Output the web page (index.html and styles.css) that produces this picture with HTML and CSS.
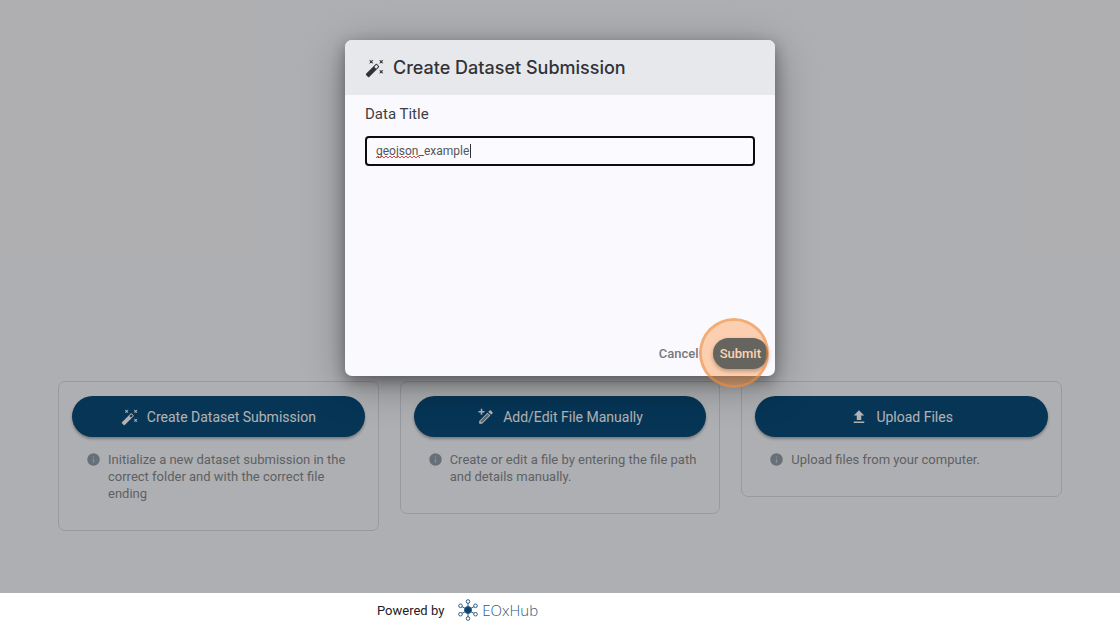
FILE: index.html
```
<!DOCTYPE html>
<html lang="en">
<head>
  <meta charset="UTF-8">
  <title>Dataset Submission</title>
  <link rel="stylesheet" href="styles.css">
</head>
<body>
  <svg class="sprite" aria-hidden="true">
    <symbol id="wand" viewBox="0 0 24 24">
      <path d="M7.5 5.6L5 7l1.4-2.5L5 2l2.5 1.4L10 2 8.6 4.500 10 7 7.500 5.600M19.500 15.400L22 14l-1.400 2.500L22 19l-2.500-1.400L17 19l1.400-2.500L17 14l2.500 1.400M22 2l-1.400 2.500L22 7l-2.500-1.400L17 7l1.400-2.500L17 2l2.500 1.400L22 2m-8.660 10.780l2.440-2.440-2.120-2.120-2.440 2.440 2.120 2.120m1.030-5.490l2.340 2.340c.39.37.39 1.020 0 1.410L5.040 22.710c-.39.39-1.040.39-1.410 0l-2.340-2.340c-.39-.37-.39-1.020 0-1.410L12.960 7.290c.39-.39 1.040-.39 1.410 0z"/>
    </symbol>
    <symbol id="pencil-plus" viewBox="0 0 24 24">
      <path d="M20.700 7c.4-.4.4-1.100 0-1.400l-2.300-2.300c-.4-.4-1.100-.4-1.400 0l-1.900 1.800 3.800 3.800M14 6.200l-11 11V21h3.800l11-11.100M6.300 19.800l-2-2L14 8.100l2 2M5 1h2v3h3v2H7v3H5V6H2V4h3z"/>
      <path d="M3.700 17.700L14 7.300l2.700 2.700L6.400 20.300H3.700z" fill-opacity=".4"/>
    </symbol>
    <symbol id="upload" viewBox="0 0 24 24">
      <path d="M9 16v-6H5l7-7 7 7h-4v6H9m-4 4v-2h14v2H5z"/>
    </symbol>
    <symbol id="info" viewBox="0 0 24 24">
      <circle cx="12" cy="12" r="9" fill-opacity=".5"/>
      <path d="M13 9h-2V7h2m0 10h-2v-6h2m-1-9a10 10 0 1 0 0 20 10 10 0 0 0 0-20z"/>
    </symbol>
  </svg>

  <main class="page">
    <div class="cards">
      <section class="card">
        <button type="button" class="action"><svg class="icon"><use href="#wand"/></svg>Create Dataset Submission</button>
        <div class="hint">
          <svg class="hint-icon"><use href="#info"/></svg>
          <p>Initialize a new dataset submission in the correct folder and with the correct file ending</p>
        </div>
      </section>
      <section class="card">
        <button type="button" class="action"><svg class="icon"><use href="#pencil-plus"/></svg>Add/Edit File Manually</button>
        <div class="hint">
          <svg class="hint-icon"><use href="#info"/></svg>
          <p>Create or edit a file by entering the file path and details manually.</p>
        </div>
      </section>
      <section class="card">
        <button type="button" class="action"><svg class="icon"><use href="#upload"/></svg>Upload Files</button>
        <div class="hint">
          <svg class="hint-icon"><use href="#info"/></svg>
          <p>Upload files from your computer.</p>
        </div>
      </section>
    </div>

    <div class="scrim">
      <form class="dialog" role="dialog" aria-labelledby="dialogTitle">
        <header class="dialog-header">
          <svg class="title-icon"><use href="#wand"/></svg>
          <h1 id="dialogTitle">Create Dataset Submission</h1>
        </header>
        <div class="dialog-body">
          <label for="dataTitle">Data Title</label>
          <div class="field">
            <input type="text" id="dataTitle" value="geojson_example">
            <svg class="squiggle" viewBox="0 0 44 4"><path d="M0 3l2-2 2 2 2-2 2 2 2-2 2 2 2-2 2 2 2-2 2 2 2-2 2 2 2-2 2 2 2-2 2 2 2-2 2 2 2-2 2 2 2-2 2 2"/></svg>
            <span class="caret"></span>
          </div>
        </div>
        <footer class="dialog-actions">
          <button type="button" class="cancel">Cancel</button>
          <div class="submit-wrap">
            <button type="submit" class="submit">Submit</button>
            <span class="click-marker"></span>
          </div>
        </footer>
      </form>
    </div>
  </main>

  <footer class="page-footer">
    <span>Powered by</span>
    <a href="#" class="brand">
      <svg class="brand-icon" viewBox="0 0 20 22">
        <path d="M10 11V4M10 11v7M10 11L3 7M10 11l7-4M10 11l-7 4M10 11l7 4"/>
        <circle class="hub" cx="10" cy="11" r="3.500"/>
        <circle cx="10" cy="2.500" r="1.800"/>
        <circle cx="10" cy="19.500" r="1.800"/>
        <circle cx="2.500" cy="6.800" r="1.800"/>
        <circle cx="17.500" cy="6.800" r="1.800"/>
        <circle cx="2.500" cy="15.200" r="1.800"/>
        <circle cx="17.500" cy="15.200" r="1.800"/>
      </svg>
      EOxHub
    </a>
  </footer>
</body>
</html>
```
FILE: styles.css
```
* {
  box-sizing: border-box;
}
body {
  margin: 0;
  min-height: 100vh;
  display: flex;
  flex-direction: column;
  font-family: Roboto, "Liberation Sans", sans-serif;
  background: #fff;
}
button, input {
  font-family: inherit;
}
.sprite {
  display: none;
}
.page {
  position: relative;
  flex: 1;
  display: flex;
  flex-direction: column;
  justify-content: flex-end;
  padding: 0 58px 62px;
  background: #fafbff;
}
.cards {
  display: grid;
  grid-template-columns: repeat(3, 1fr);
  gap: 21px;
  align-items: start;
}
.card {
  padding: 14px 13px 28px;
  border: 1px solid #d8dfe4;
  border-radius: 7px;
}
.action {
  display: flex;
  align-items: center;
  justify-content: center;
  gap: 8px;
  width: 100%;
  height: 41px;
  border: 0;
  border-radius: 21px;
  background: #0a4c7c;
  color: #fff;
  font-size: 14px;
  box-shadow: 0 2px 3px rgba(0, 0, 0, 0.3);
}
.icon {
  width: 18px;
  height: 18px;
  fill: currentColor;
}
.hint {
  display: flex;
  gap: 7px;
  padding: 0 4px 0 14px;
  margin-top: 14px;
  color: #888b90;
  font-size: 13px;
  line-height: 17px;
}
.hint p {
  margin: 0;
}
.hint-icon {
  flex: none;
  width: 15px;
  height: 17px;
  fill: #94a1ad;
}

/* dialog */
.scrim {
  position: absolute;
  inset: 0;
  display: flex;
  align-items: flex-start;
  justify-content: center;
  padding-top: 40px;
  background: rgba(0, 0, 0, 0.3);
}
.dialog {
  display: flex;
  flex-direction: column;
  width: 100%;
  max-width: 430px;
  min-height: 336px;
  border-radius: 7px;
  background: #faf9fe;
  box-shadow: 0 9px 38px rgba(0, 0, 0, 0.35), 0 5px 14px rgba(0, 0, 0, 0.3);
}
.dialog-header {
  display: flex;
  align-items: center;
  gap: 8px;
  height: 55px;
  padding: 0 20px;
  border-radius: 7px 7px 0 0;
  background: #e7e8eb;
  color: #313237;
}
.dialog-header h1 {
  margin: 0;
  font: 500 18px Inter, sans-serif;
}
.title-icon {
  width: 20px;
  height: 20px;
  fill: currentColor;
}
.dialog-body {
  flex: 1;
  padding: 10px 20px;
}
.dialog-body label {
  display: block;
  color: #3d3e43;
  font-size: 15px;
  line-height: 18px;
}
.field {
  position: relative;
  margin-top: 13px;
}
.field input {
  display: block;
  width: 100%;
  height: 30px;
  padding: 0 9px;
  border: 2px solid #0b0b10;
  border-radius: 4px;
  outline: 0;
  background: #fbfaff;
  color: #55565b;
  font-size: 12px;
}
.squiggle {
  position: absolute;
  left: 11px;
  top: 19px;
  width: 44px;
  height: 4px;
  fill: none;
  stroke: #d9484c;
}
.caret {
  position: absolute;
  left: 105px;
  top: 8px;
  width: 1px;
  height: 14px;
  background: #333;
}
.dialog-actions {
  display: flex;
  align-items: center;
  justify-content: flex-end;
  gap: 14px;
  padding: 0 7px 7px;
}
.cancel {
  padding: 0;
  border: 0;
  background: none;
  color: #77787c;
  font-size: 13px;
  font-weight: 500;
}
.submit-wrap {
  position: relative;
}
.submit {
  display: block;
  height: 31px;
  padding: 0 7px;
  border: 0;
  border-radius: 16px;
  background: #0e507d;
  color: #fff;
  font-size: 13px;
  font-weight: 500;
  box-shadow: 0 2px 4px rgba(0, 0, 0, 0.4);
}
.click-marker {
  position: absolute;
  left: -14px;
  top: -20px;
  width: 70px;
  height: 70px;
  border: 3px solid rgba(240, 140, 60, 0.7);
  border-radius: 50%;
  background: rgba(252, 136, 42, 0.37);
  background-clip: padding-box;
  pointer-events: none;
}

/* footer */
.page-footer {
  display: flex;
  align-items: center;
  gap: 14px;
  height: 34px;
  padding-left: 377px;
  color: #1f2024;
  font-size: 13px;
}
.brand {
  display: flex;
  align-items: center;
  gap: 4px;
  color: #2c5a7a;
  font: 300 15px "Open Sans", sans-serif;
  text-decoration: none;
}
.brand-icon {
  width: 20px;
  height: 22px;
  fill: #fff;
  stroke: #2c5f83;
}
.brand-icon .hub {
  fill: #07436e;
}
```
